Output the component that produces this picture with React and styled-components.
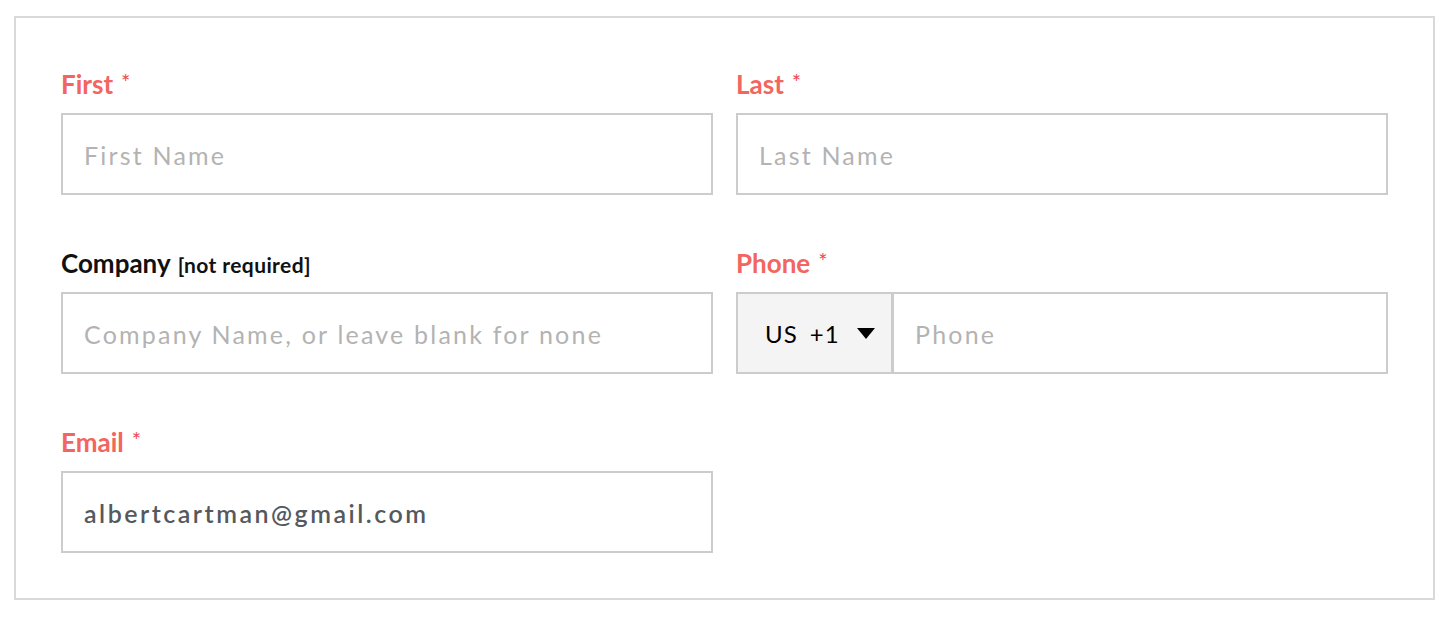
import styled, { createGlobalStyle } from "styled-components";

const GlobalStyle = createGlobalStyle`
  body {
    margin: 0;
    background: #ffffff;
    font-family: "Lato", "Open Sans", sans-serif;
  }
`;

const Page = styled.div`
  padding: 16px 16px 0 14px;
`;

const FormBox = styled.form`
  width: 1421px;
  box-sizing: border-box;
  border: 2px solid #d9d9d9;
  padding: 49px 45px 45px;
  display: grid;
  grid-template-columns: 652px 652px;
  column-gap: 23px;
  row-gap: 51px;
`;

const Field = styled.div`
  display: flex;
  flex-direction: column;
`;

const Label = styled.label`
  display: block;
  height: 30px;
  padding-top: 2px;
  line-height: 30px;
  margin-bottom: 14px;
  font-size: 26px;
  font-weight: 700;
  color: ${(p) => (p.$required ? "#f26560" : "#111111")};
`;

const Star = styled.span`
  font-size: 22px;
  font-weight: 400;
  color: #f04848;
  vertical-align: top;
  margin-left: 8px;
  position: relative;
  top: -2px;
`;

const Note = styled.span`
  font-size: 21px;
  font-weight: 700;
  letter-spacing: 0.4px;
  color: #111111;
  margin-left: 7px;
`;

const TextInput = styled.input`
  box-sizing: border-box;
  width: 100%;
  height: 82px;
  border: 2px solid #cccccc;
  border-radius: 0;
  padding: 2px 21px 0;
  font-family: "Lato", "Open Sans", sans-serif;
  font-size: 25px;
  letter-spacing: ${(p) => (p.$filled ? "2.5px" : "2.2px")};
  color: #55595e;
  font-weight: ${(p) => (p.$filled ? 600 : 400)};
  background: #ffffff;
  outline: none;

  &::placeholder {
    color: #b3b3b3;
    font-weight: 400;
  }
`;

const PhoneGroup = styled.div`
  display: flex;
  height: 82px;
`;

const CountrySelect = styled.div`
  box-sizing: border-box;
  width: 157px;
  flex: none;
  height: 82px;
  border: 2px solid #cccccc;
  background: #f4f4f4;
  display: flex;
  align-items: center;
  padding-left: 27px;
  gap: 17px;
  font-size: 24px;
  color: #000000;
  letter-spacing: 1px;
  word-spacing: 5px;
`;

const Caret = styled.span`
  width: 0;
  height: 0;
  border-left: 9px solid transparent;
  border-right: 9px solid transparent;
  border-top: 11px solid #000000;
`;

const PhoneInput = styled(TextInput)`
  flex: 1;
  border-left-width: 1px;
`;

const Required = ({ children }) => (
  <Label $required>
    {children}
    <Star>*</Star>
  </Label>
);

const App = () => {
  return (
    <>
      <GlobalStyle />
      <Page>
        <FormBox onSubmit={(e) => e.preventDefault()}>
          <Field>
            <Required>First</Required>
            <TextInput placeholder="First Name" />
          </Field>
          <Field>
            <Required>Last</Required>
            <TextInput placeholder="Last Name" />
          </Field>
          <Field>
            <Label>
              Company<Note>[not required]</Note>
            </Label>
            <TextInput placeholder="Company Name, or leave blank for none" />
          </Field>
          <Field>
            <Required>Phone</Required>
            <PhoneGroup>
              <CountrySelect>
                <span>US +1</span>
                <Caret />
              </CountrySelect>
              <PhoneInput placeholder="Phone" />
            </PhoneGroup>
          </Field>
          <Field>
            <Required>Email</Required>
            <TextInput $filled defaultValue="albertcartman@gmail.com" />
          </Field>
        </FormBox>
      </Page>
    </>
  );
};

export default App;
